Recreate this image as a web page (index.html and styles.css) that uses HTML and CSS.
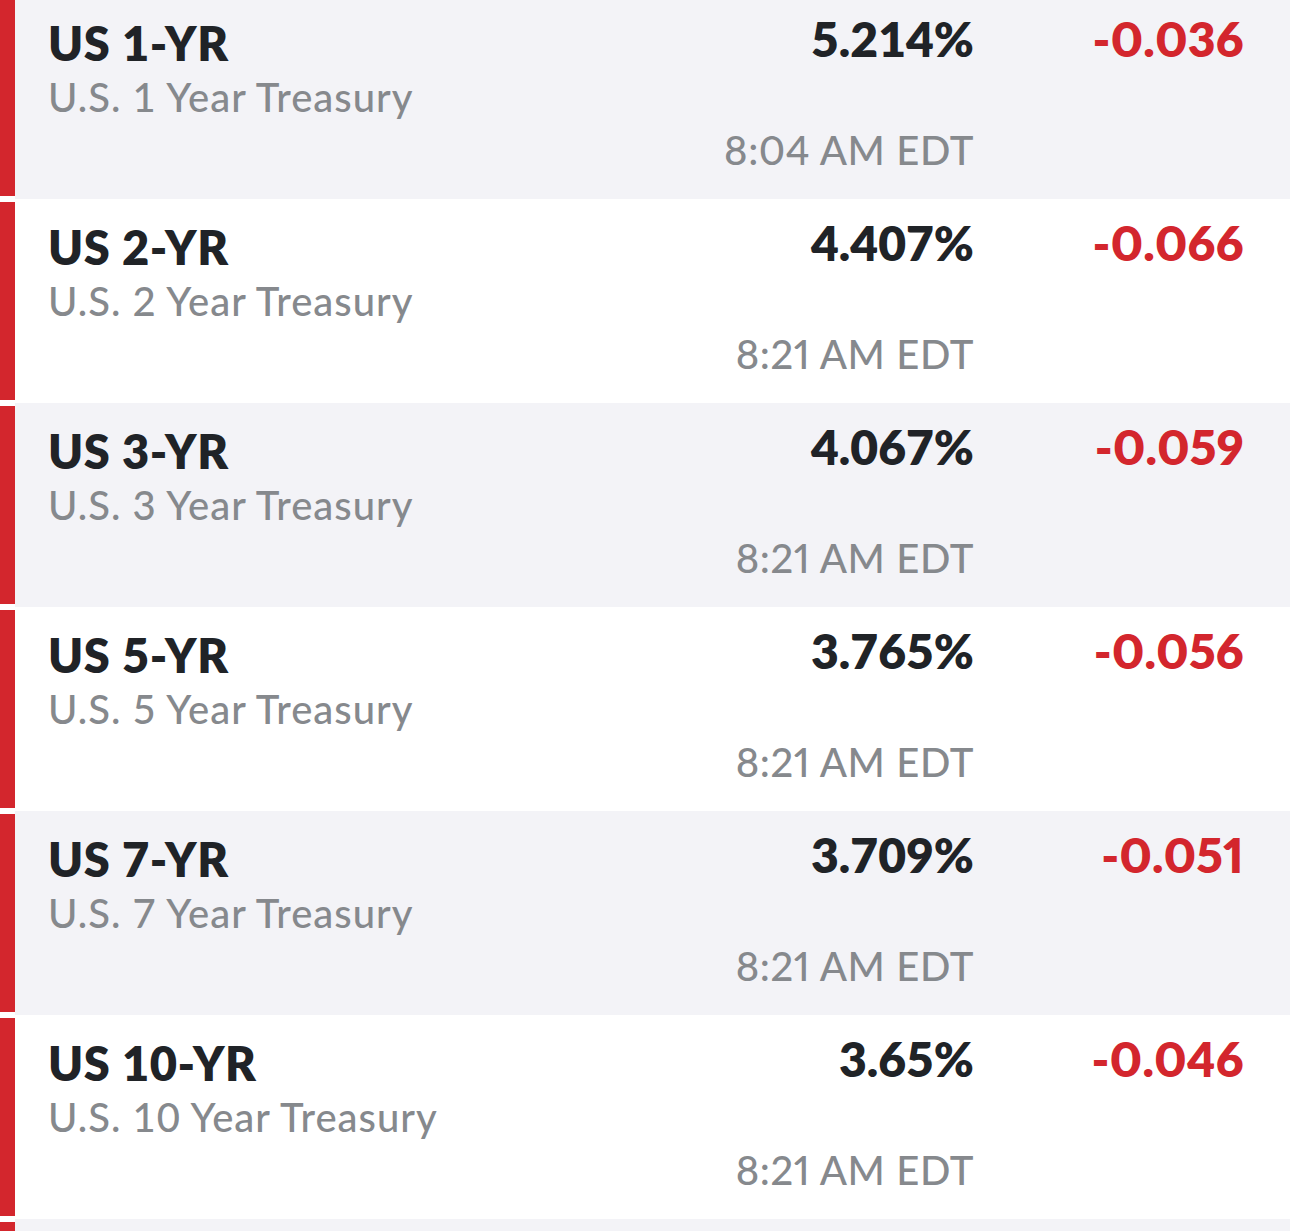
FILE: index.html
```html
<!DOCTYPE html>
<html lang="en">
<head>
<meta charset="utf-8">
<title>US Treasuries</title>
<link rel="stylesheet" href="styles.css">
</head>
<body>
<div class="list">
  <div class="row">
    <div class="bar"></div>
    <div class="body alt">
      <div class="names"><div class="symbol">US 1-YR</div><div class="desc">U.S. 1 Year Treasury</div></div>
      <div class="quote"><div class="price">5.214%</div><div class="time">8:04 AM EDT</div></div>
      <div class="change">-0.036</div>
    </div>
  </div>
  <div class="row">
    <div class="bar"></div>
    <div class="body">
      <div class="names"><div class="symbol">US 2-YR</div><div class="desc">U.S. 2 Year Treasury</div></div>
      <div class="quote"><div class="price">4.407%</div><div class="time">8:21 AM EDT</div></div>
      <div class="change">-0.066</div>
    </div>
  </div>
  <div class="row">
    <div class="bar"></div>
    <div class="body alt">
      <div class="names"><div class="symbol">US 3-YR</div><div class="desc">U.S. 3 Year Treasury</div></div>
      <div class="quote"><div class="price">4.067%</div><div class="time">8:21 AM EDT</div></div>
      <div class="change">-0.059</div>
    </div>
  </div>
  <div class="row">
    <div class="bar"></div>
    <div class="body">
      <div class="names"><div class="symbol">US 5-YR</div><div class="desc">U.S. 5 Year Treasury</div></div>
      <div class="quote"><div class="price">3.765%</div><div class="time">8:21 AM EDT</div></div>
      <div class="change">-0.056</div>
    </div>
  </div>
  <div class="row">
    <div class="bar"></div>
    <div class="body alt">
      <div class="names"><div class="symbol">US 7-YR</div><div class="desc">U.S. 7 Year Treasury</div></div>
      <div class="quote"><div class="price">3.709%</div><div class="time">8:21 AM EDT</div></div>
      <div class="change">-0.051</div>
    </div>
  </div>
  <div class="row">
    <div class="bar"></div>
    <div class="body">
      <div class="names"><div class="symbol">US 10-YR</div><div class="desc">U.S. 10 Year Treasury</div></div>
      <div class="quote"><div class="price">3.65%</div><div class="time">8:21 AM EDT</div></div>
      <div class="change">-0.046</div>
    </div>
  </div>
  <div class="row">
    <div class="bar"></div>
    <div class="body alt"></div>
  </div>
</div>
</body>
</html>
```

FILE: styles.css
```css
html, body {
  margin: 0;
  padding: 0;
  background: #ffffff;
  overflow: hidden;
}
body {
  font-family: "Lato", "Liberation Sans", sans-serif;
  width: 1290px;
  height: 1231px;
}
.list {
  margin-top: -5.3px;
}
.row {
  display: flex;
  height: 204px;
  background: #ffffff;
}
.bar {
  flex: 0 0 15px;
  margin: 3px 0;
  background: #d3262d;
}
.body {
  flex: 1;
  display: grid;
  grid-template-columns: 1fr auto 270px;
  padding: 0 46px 0 33px;
  background: #ffffff;
}
.body.alt {
  background: #f3f3f7;
}
.names {
  padding-top: 19.9px;
}
.symbol {
  font-size: 47px;
  line-height: 1.2;
  font-weight: 800;
  letter-spacing: 0.6px;
  color: #202327;
}
.desc {
  margin-top: 2.2px;
  font-size: 40px;
  line-height: 1.2;
  font-weight: 500;
  letter-spacing: 1px;
  color: #86898d;
}
.quote {
  padding-top: 15.6px;
  text-align: right;
}
.price {
  font-size: 48px;
  line-height: 1.2;
  font-weight: 800;
  color: #202327;
}
.time {
  margin-top: 58px;
  font-size: 40px;
  line-height: 1.2;
  font-weight: 500;
  letter-spacing: 0.6px;
  font-variant-numeric: proportional-nums;
  color: #86898d;
}
.change {
  padding-top: 15.6px;
  text-align: right;
  font-size: 48px;
  line-height: 1.2;
  font-weight: 800;
  letter-spacing: 0.3px;
  font-variant-numeric: proportional-nums;
  color: #d3262d;
}
```
